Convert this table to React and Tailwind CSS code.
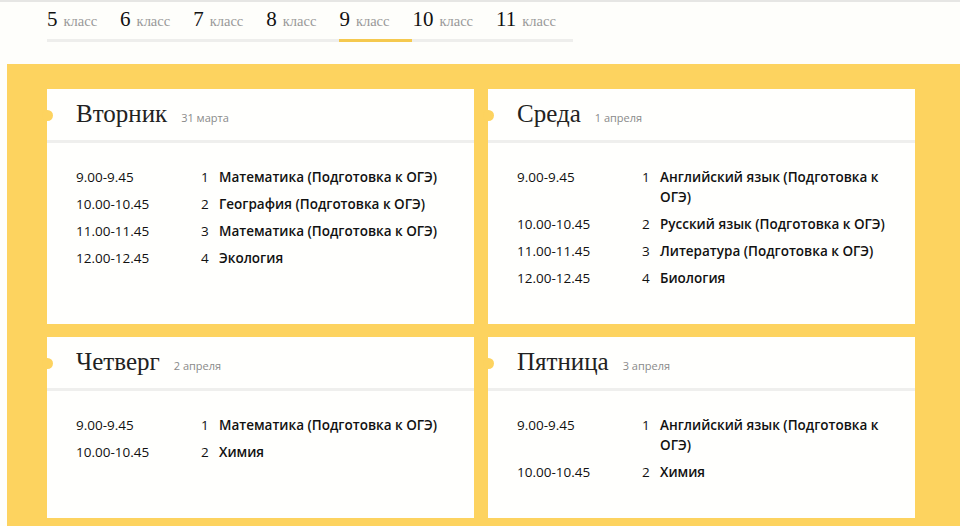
const grades = ['5', '6', '7', '8', '9', '10', '11'];

const days = [
  {
    name: 'Вторник',
    date: '31 марта',
    lessons: [
      ['9.00-9.45', 1, 'Математика (Подготовка к ОГЭ)'],
      ['10.00-10.45', 2, 'География (Подготовка к ОГЭ)'],
      ['11.00-11.45', 3, 'Математика (Подготовка к ОГЭ)'],
      ['12.00-12.45', 4, 'Экология'],
    ],
  },
  {
    name: 'Среда',
    date: '1 апреля',
    lessons: [
      ['9.00-9.45', 1, 'Английский язык (Подготовка к ОГЭ)'],
      ['10.00-10.45', 2, 'Русский язык (Подготовка к ОГЭ)'],
      ['11.00-11.45', 3, 'Литература (Подготовка к ОГЭ)'],
      ['12.00-12.45', 4, 'Биология'],
    ],
  },
  {
    name: 'Четверг',
    date: '2 апреля',
    lessons: [
      ['9.00-9.45', 1, 'Математика (Подготовка к ОГЭ)'],
      ['10.00-10.45', 2, 'Химия'],
    ],
  },
  {
    name: 'Пятница',
    date: '3 апреля',
    lessons: [
      ['9.00-9.45', 1, 'Английский язык (Подготовка к ОГЭ)'],
      ['10.00-10.45', 2, 'Химия'],
    ],
  },
];

const DayCard = ({ day }) => (
  <div className="relative bg-[#fffffd] flex flex-col">
    {/* yellow notch on the left edge */}
    <span className="absolute left-[-5px] top-[21px] w-[11px] h-[11px] rounded-full bg-[#fdd35f]" />
    <div className="h-[54px] flex items-baseline pl-[29px] pt-[11px] border-b-[3px] border-[#efefed]">
      <span className="font-['Liberation_Serif',serif] text-[25px] leading-[28px] text-[#222]">{day.name}</span>
      <span className="ml-[14px] font-['Open_Sans',sans-serif] text-[11px] text-[#8a8a8a]">{day.date}</span>
    </div>
    <div className="pl-[29px] pr-[20px] pt-6 pb-[36px] flex flex-col gap-[7px] font-['Open_Sans',sans-serif] text-[13.5px] leading-5 text-[#111]">
      {day.lessons.map(([time, n, subject]) => (
        <div key={n} className="flex">
          <span className="w-[125px] shrink-0">{time}</span>
          <span className="w-[18px] shrink-0">{n}</span>
          <span className="font-semibold">{subject}</span>
        </div>
      ))}
    </div>
  </div>
);

const App = () => {
  return (
    <div className="min-h-[526px] bg-[#fefefb] border-t-2 border-[#e6e6e4] overflow-hidden">
      <div className="pl-[47px] pt-[4px] h-[62px]">
        <div className="inline-flex border-b-[3px] border-[#eeeeec] w-[526px] leading-[26px]">
          {grades.map(g => (
            <div
              key={g}
              className={`pr-[23px] pb-[5px] mb-[-3px] border-b-[3px] ${g === '9' ? 'border-[#f5c94f]' : 'border-transparent'} font-['Liberation_Serif',serif] whitespace-nowrap`}
            >
              <span className="text-[21px] text-[#111]">{g}</span>
              <span className="ml-[6px] text-[14.5px] text-[#999]">класс</span>
            </div>
          ))}
        </div>
      </div>
      <div className="ml-[7px] bg-[#fdd35f] pl-[40px] pr-[45px] pt-[25px] pb-[10px]">
        <div className="grid grid-cols-2 gap-x-[14px] gap-y-[13px]">
          {days.map(day => (
            <DayCard key={day.name} day={day} />
          ))}
        </div>
      </div>
    </div>
  );
};

export default App;
